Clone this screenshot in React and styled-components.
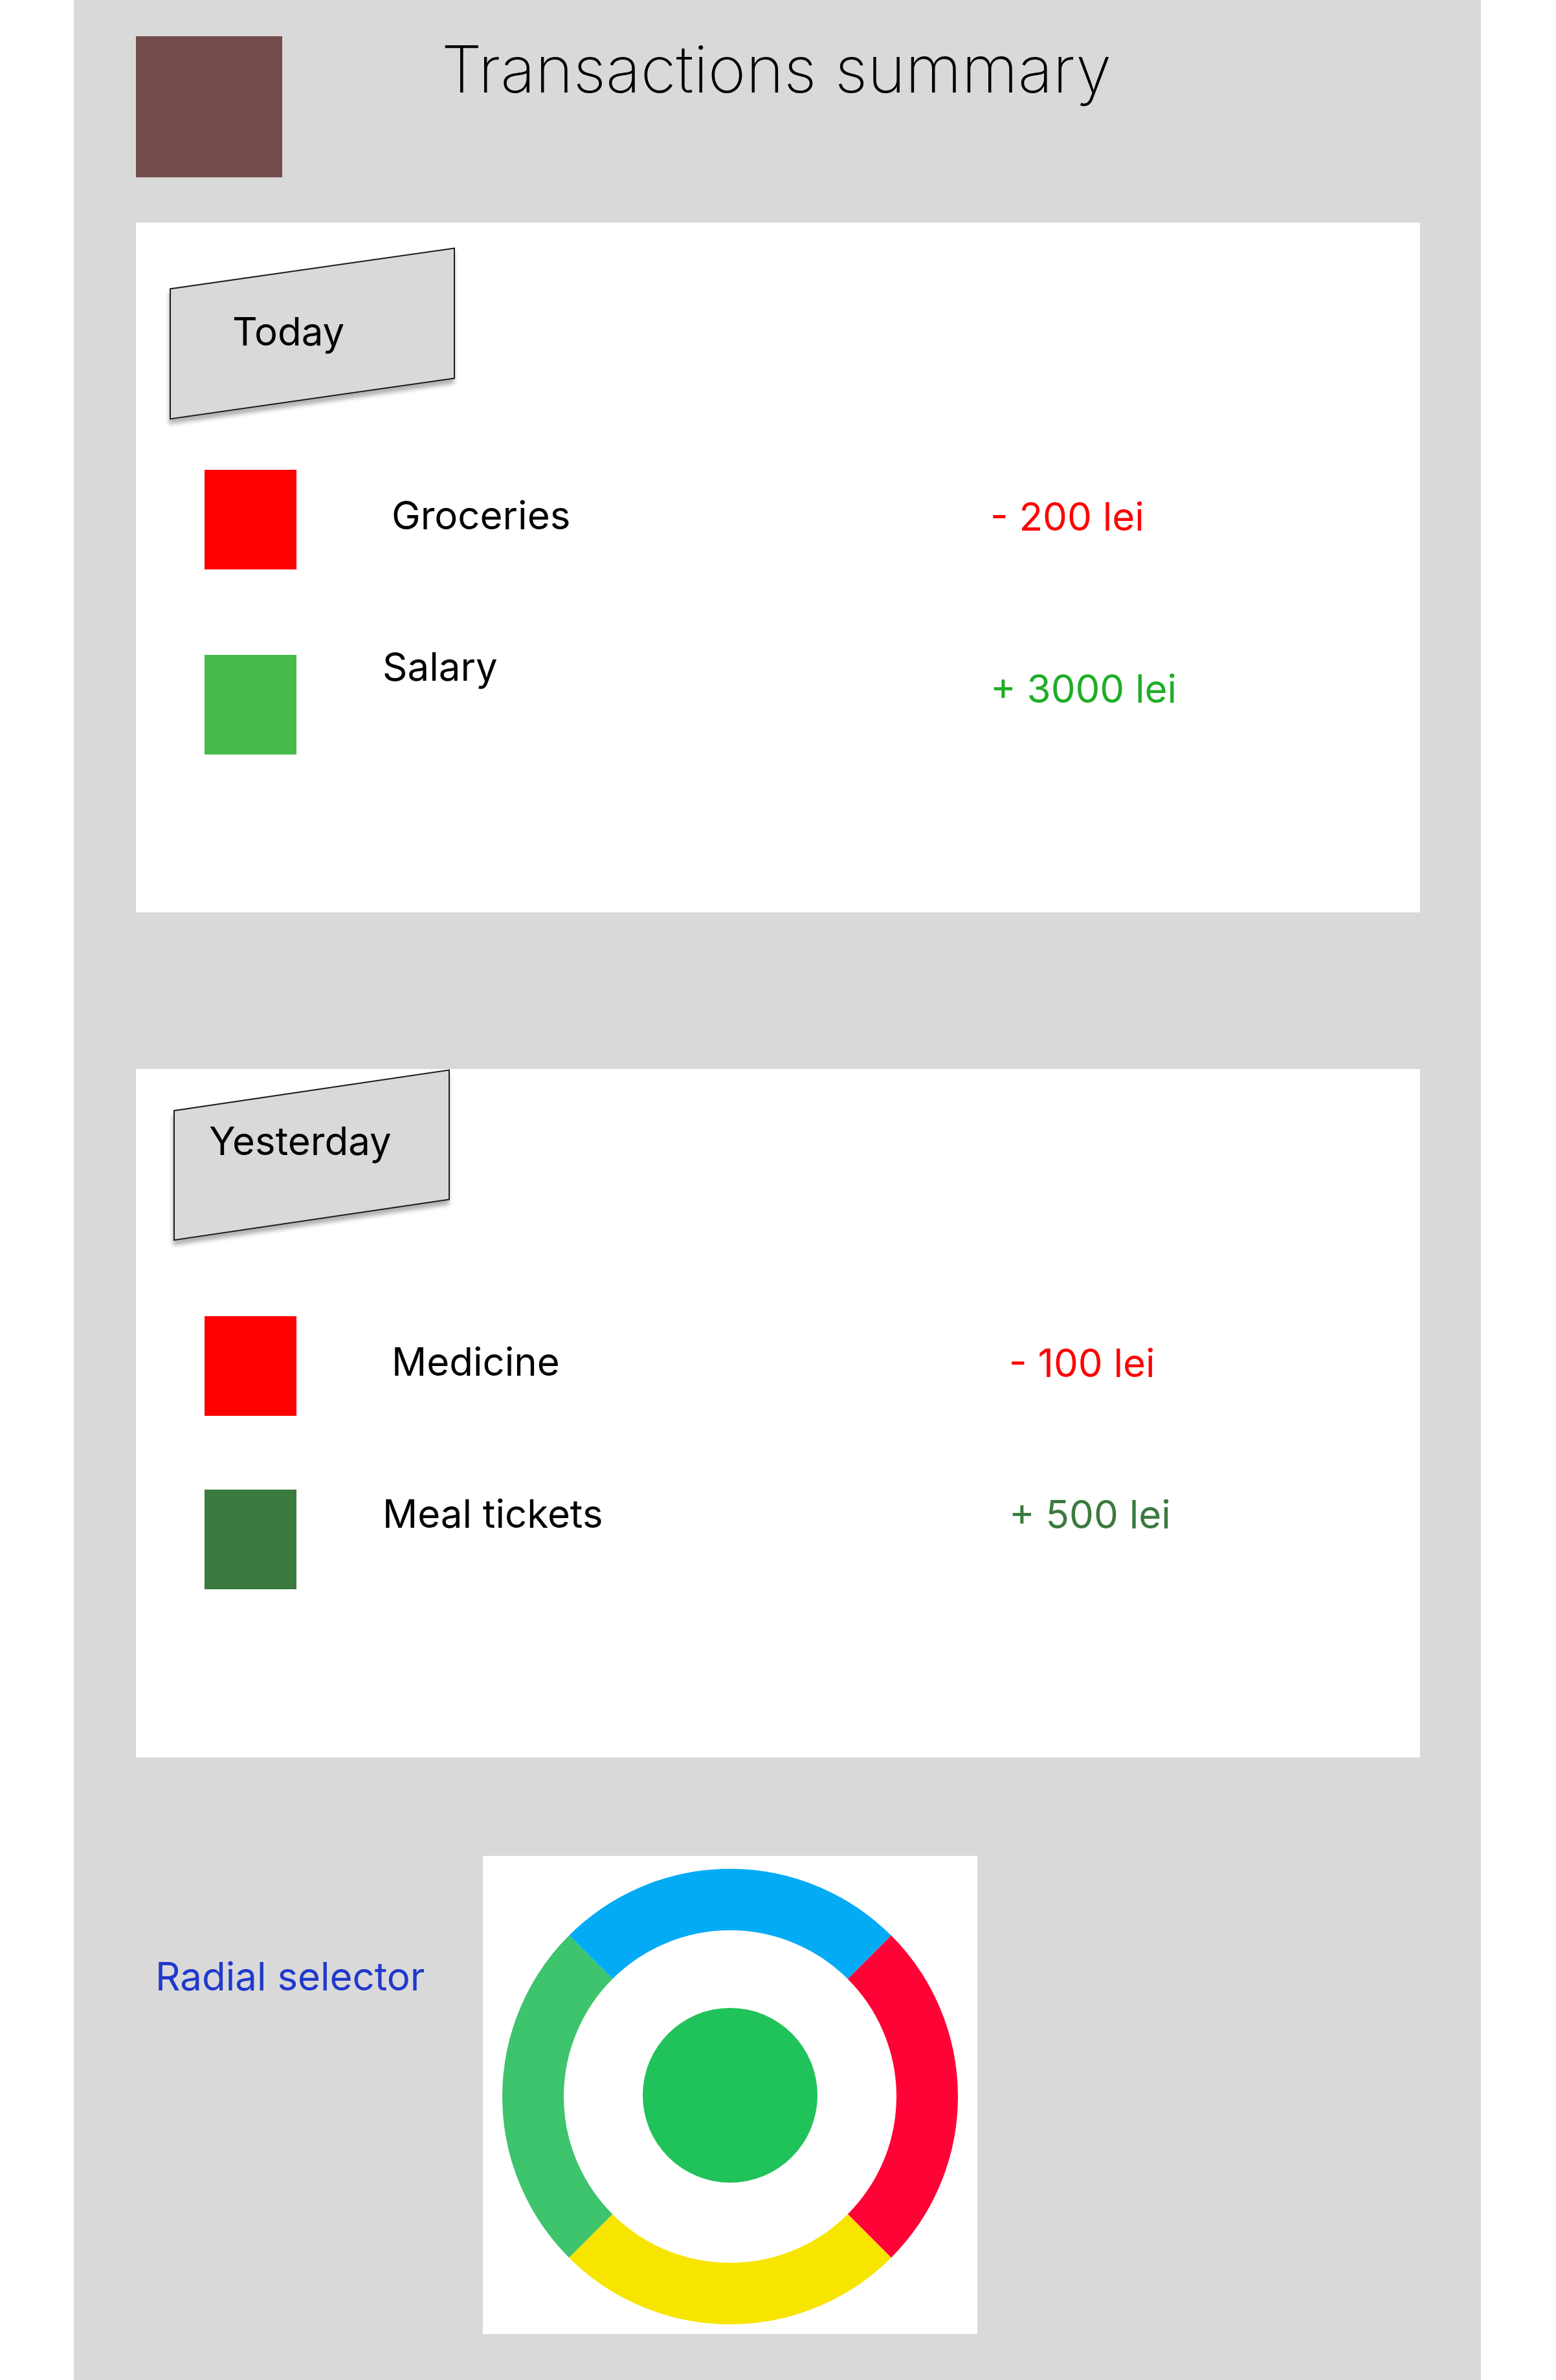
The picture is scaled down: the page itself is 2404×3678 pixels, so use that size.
import styled, { createGlobalStyle } from "styled-components";

const GlobalStyle = createGlobalStyle`
  html, body {
    margin: 0;
    padding: 0;
    background: #ffffff;
    font-family: Inter, "Liberation Sans", sans-serif;
  }
`;

const Panel = styled.div`
  box-sizing: border-box;
  width: 2174px;
  min-height: 100vh;
  margin-left: 114px;
  padding: 56px 94px 0 96px;
  background: #d9d9d9;
`;

const Header = styled.header`
  display: flex;
  align-items: flex-start;
`;

const Logo = styled.div`
  width: 226px;
  height: 218px;
  background: #734b4b;
  flex-shrink: 0;
`;

const Title = styled.h1`
  margin: 1px 0 0 246px;
  font-size: 100px;
  line-height: 1;
  font-weight: 200;
  color: #000;
  white-space: nowrap;
`;

const Card = styled.section`
  display: flow-root;
  box-sizing: border-box;
  height: ${(p) => p.$height}px;
  margin-top: ${(p) => p.$gap}px;
  background: #ffffff;
`;

const Tag = styled.div`
  position: relative;
  isolation: isolate;
  box-sizing: border-box;
  width: ${(p) => p.$w}px;
  height: ${(p) => p.$h}px;
  margin: ${(p) => p.$top}px 0 0 ${(p) => p.$left}px;
  padding: ${(p) => p.$padTop}px 0 0 ${(p) => p.$padLeft}px;
  font-size: 60px;
  line-height: 1;
  color: #000;

  &::before {
    content: "";
    position: absolute;
    inset: 0;
    box-sizing: border-box;
    background: #d9d9d9;
    border: 2px solid #1a1a1a;
    box-shadow: -1px 7px 6px rgba(0, 0, 0, 0.3);
    transform: skewY(-${(p) => p.$skew}deg);
    z-index: -1;
  }
`;

const Rows = styled.div`
  display: flex;
  flex-direction: column;
  gap: ${(p) => p.$gap}px;
  margin: ${(p) => p.$top}px 0 0 106px;
`;

const Row = styled.div`
  display: grid;
  grid-template-columns: 142px ${(p) => p.$labelCol}px auto;
  align-items: start;
`;

const Swatch = styled.div`
  width: 142px;
  height: 154px;
  background: ${(p) => p.$color};
`;

const Name = styled.div`
  margin-top: ${(p) => p.$top}px;
  padding-left: ${(p) => p.$indent}px;
  font-size: 60px;
  line-height: 1;
  color: #000;
  white-space: nowrap;
`;

const Amount = styled.div`
  margin-top: ${(p) => p.$top}px;
  font-size: 60px;
  line-height: 1;
  color: ${(p) => p.$color};
  white-space: nowrap;
`;

const RadialRow = styled.div`
  display: grid;
  grid-template-columns: 506px 764px;
  margin-top: 152px;
  padding-left: 30px;
`;

const RadialLabel = styled.div`
  margin-top: 156px;
  font-size: 60px;
  line-height: 1;
  color: #2039cc;
  white-space: nowrap;
`;

const RadialBox = styled.div`
  width: 764px;
  height: 739px;
  background: #ffffff;

  svg {
    display: block;
  }
`;

const today = [
  { name: "Groceries", amount: "- 200 lei", swatch: "#ff0000", tone: "#ff0000", indent: 147, nameTop: 40, amountTop: 42 },
  { name: "Salary", amount: "+ 3000 lei", swatch: "#45bc4a", tone: "#1fad27", indent: 133, nameTop: -12, amountTop: 22 },
];

const yesterday = [
  { name: "Medicine", amount: "- 100 lei", swatch: "#ff0000", tone: "#ff0000", indent: 147, nameTop: 40, amountTop: 42 },
  { name: "Meal tickets", amount: "+ 500 lei", swatch: "#3b7a3e", tone: "#3b7a3e", indent: 133, nameTop: 7, amountTop: 8 },
];

const TransactionRow = ({ item, labelCol }) => (
  <Row $labelCol={labelCol}>
    <Swatch $color={item.swatch} />
    <Name $top={item.nameTop} $indent={item.indent}>
      {item.name}
    </Name>
    <Amount $top={item.amountTop} $color={item.tone}>
      {item.amount}
    </Amount>
  </Row>
);

const RadialSelector = () => {
  const cx = 382;
  const cy = 372;
  const r = 304.5;
  const d = r * Math.SQRT1_2;
  const ul = `${cx - d} ${cy - d}`;
  const ur = `${cx + d} ${cy - d}`;
  const lr = `${cx + d} ${cy + d}`;
  const ll = `${cx - d} ${cy + d}`;
  const arc = (from, to) => `M ${from} A ${r} ${r} 0 0 1 ${to}`;
  return (
    <svg width="764" height="739" viewBox="0 0 764 739">
      <g fill="none" strokeWidth="95">
        <path d={arc(ul, ur)} stroke="#03abf5" />
        <path d={arc(ur, lr)} stroke="#ff0336" />
        <path d={arc(lr, ll)} stroke="#f7e500" />
        <path d={arc(ll, ul)} stroke="#3ec46c" />
      </g>
      <circle cx={cx} cy={cy - 2} r="135" fill="#20c25a" />
    </svg>
  );
};

export default function App() {
  return (
    <>
      <GlobalStyle />
      <Panel>
        <Header>
          <Logo />
          <Title>Transactions summary</Title>
        </Header>

        <Card $height={1066} $gap={70}>
          <Tag $w={441} $h={203} $top={70} $left={52} $padTop={68} $padLeft={97} $skew={8.13}>
            Today
          </Tag>
          <Rows $top={109} $gap={132}>
            {today.map((item) => (
              <TransactionRow key={item.name} item={item} labelCol={1072} />
            ))}
          </Rows>
        </Card>

        <Card $height={1064} $gap={242}>
          <Tag $w={427} $h={202} $top={32} $left={58} $padTop={49} $padLeft={55} $skew={8.39}>
            Yesterday
          </Tag>
          <Rows $top={148} $gap={114}>
            {yesterday.map((item) => (
              <TransactionRow key={item.name} item={item} labelCol={1101} />
            ))}
          </Rows>
        </Card>

        <RadialRow>
          <RadialLabel>Radial selector</RadialLabel>
          <RadialBox>
            <RadialSelector />
          </RadialBox>
        </RadialRow>
      </Panel>
    </>
  );
}
